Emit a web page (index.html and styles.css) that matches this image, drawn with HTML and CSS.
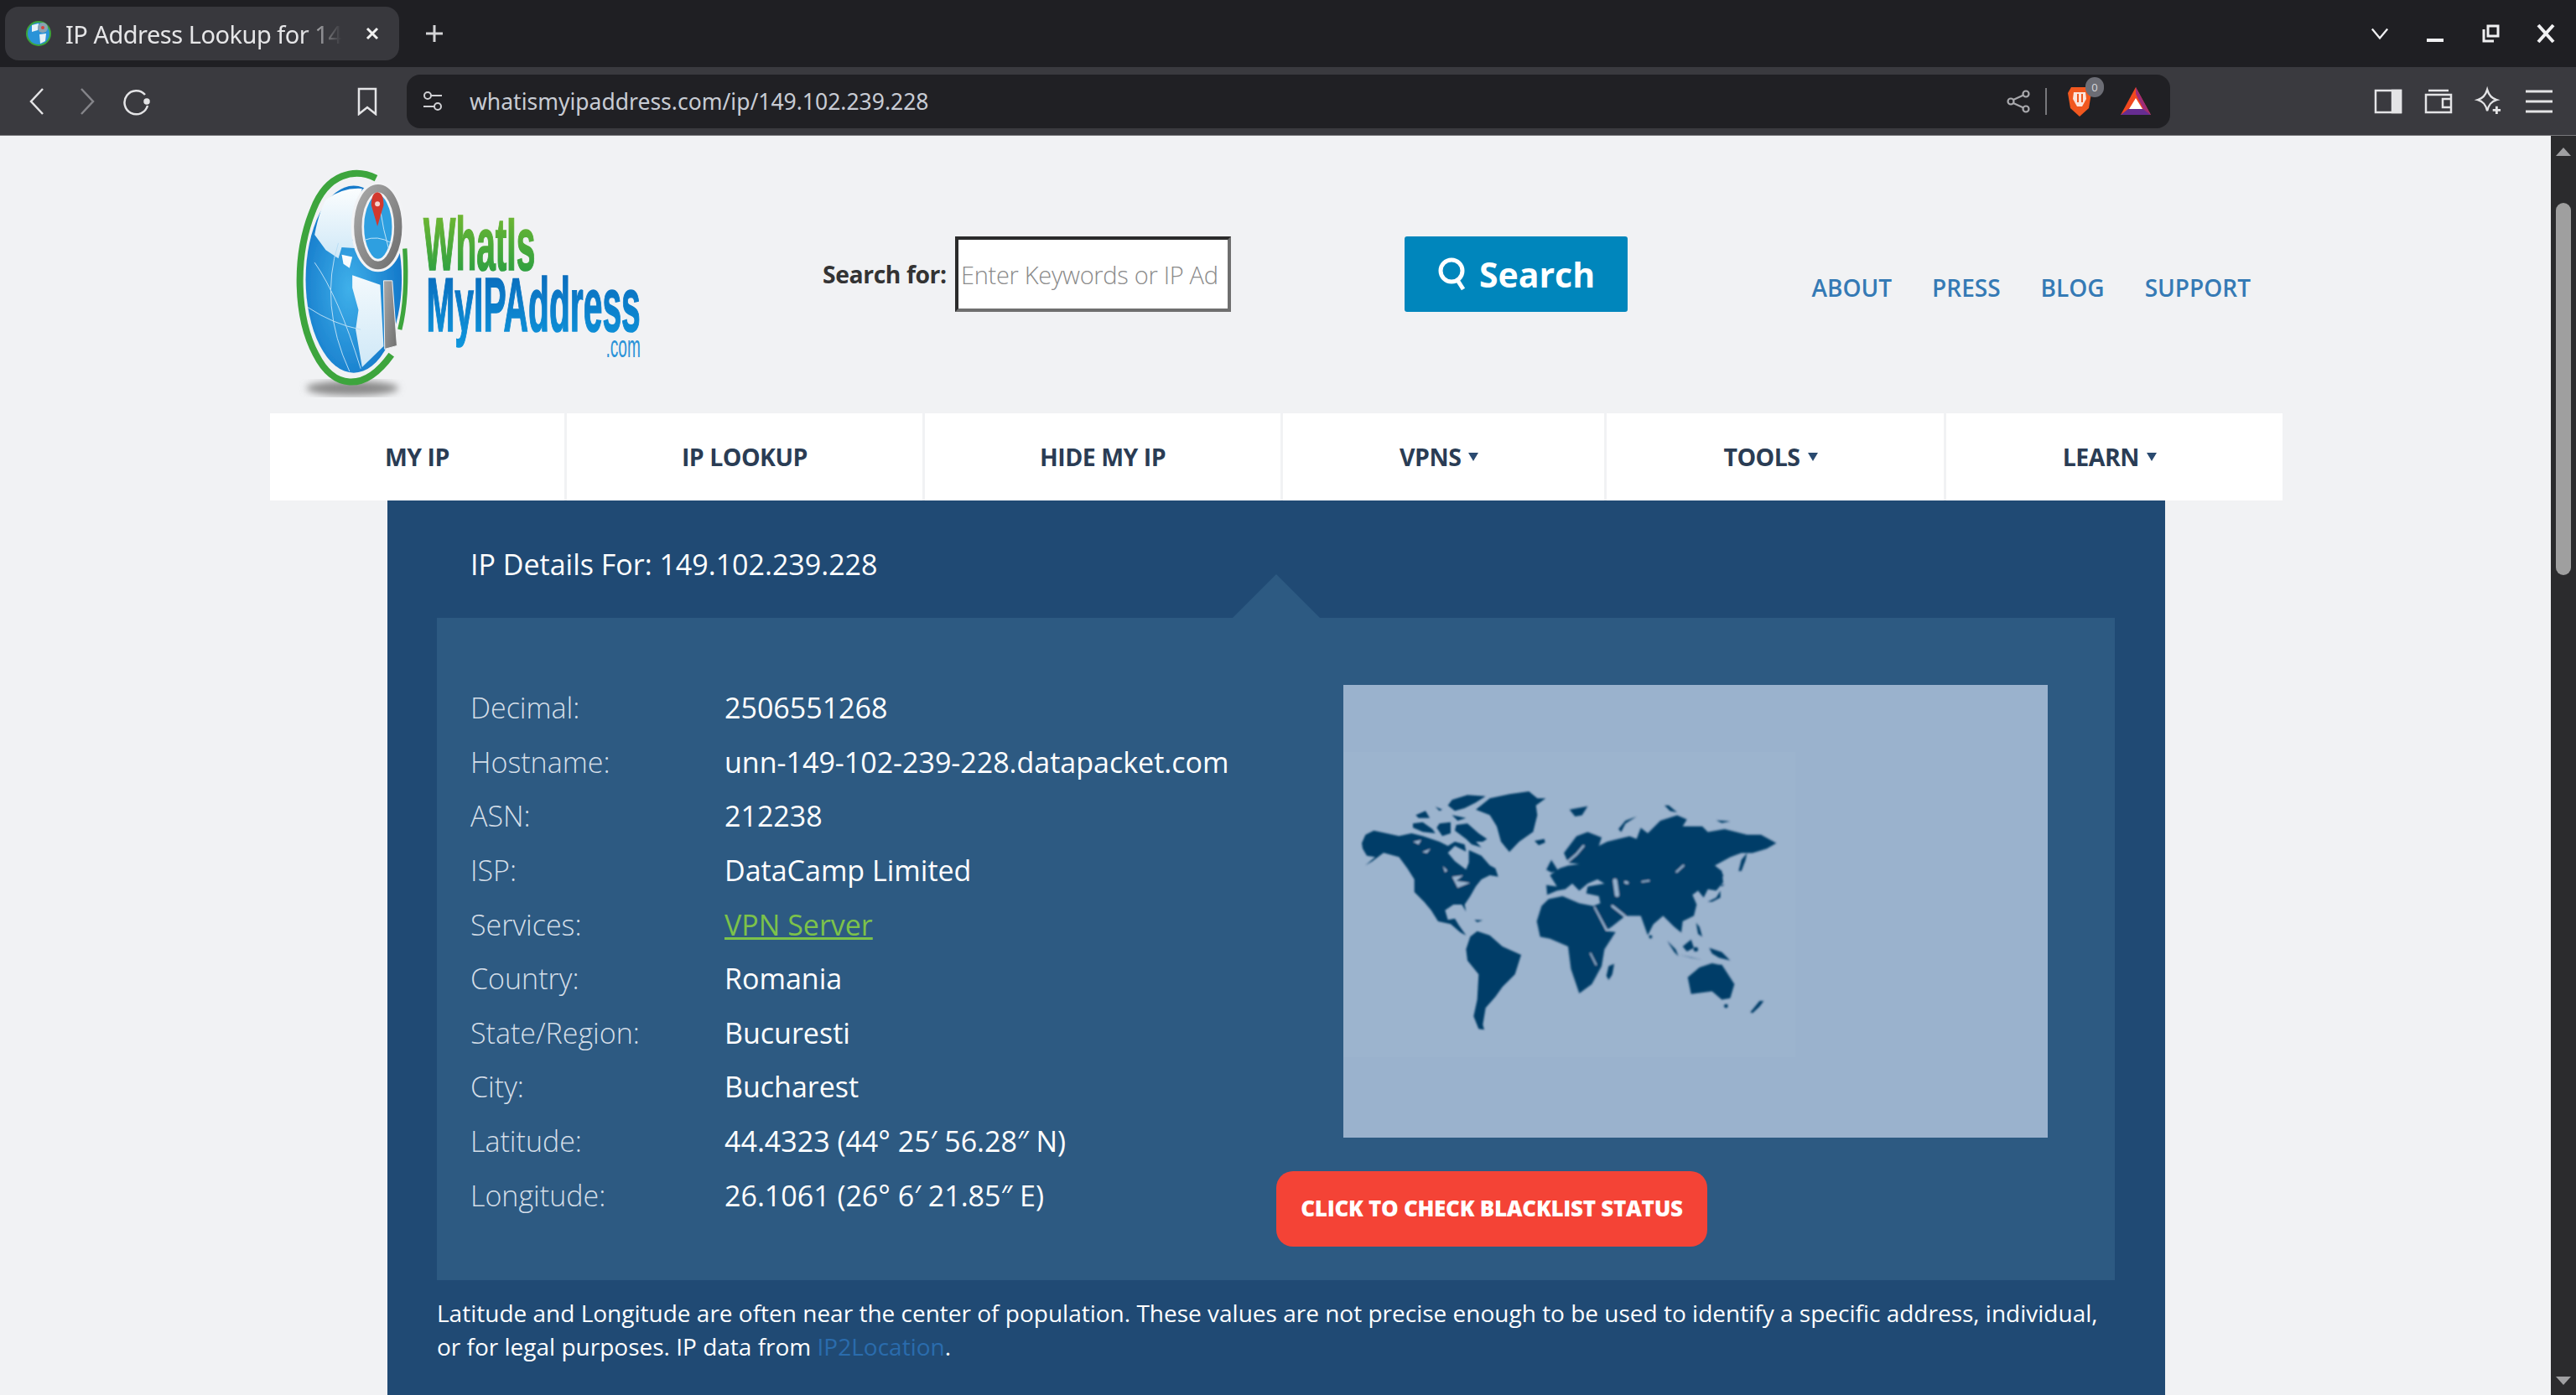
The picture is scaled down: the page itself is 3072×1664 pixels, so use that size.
FILE: index.html
```html
<!DOCTYPE html>
<html lang="en">
<head>
    <meta charset="UTF-8">
    <title>IP Address Lookup for 149.102.239.228</title>
    <link rel="stylesheet" href="styles.css">
</head>
<body>
    <div class="tabstrip">
        <div class="tab">
            <svg class="favicon" viewBox="0 0 32 32">
                <circle cx="16" cy="16" r="15" fill="#3ca53c"/>
                <circle cx="16" cy="16" r="13" fill="#2a93d8"/>
                <path d="M8 6 L16 4 L15 12 L8 14Z M17 17 L25 16 L24 25 L18 28Z" fill="#e8f2f8"/>
                <circle cx="21" cy="9" r="6" fill="#8aa2b2"/>
                <circle cx="21" cy="9" r="2" fill="#d8433a"/>
            </svg>
            <span class="tab-title">IP Address Lookup for 149.102.239.228</span>
            <svg class="tab-close" viewBox="0 0 16 16"><path d="M2 2 L14 14 M14 2 L2 14"/></svg>
        </div>
        <svg class="new-tab" viewBox="0 0 22 22"><path d="M11 1 V21 M1 11 H21"/></svg>
        <div class="window-btns">
            <svg viewBox="0 0 24 24"><path d="M2 6 L12 18 L22 6"/></svg>
            <svg viewBox="0 0 22 24"><path d="M1 20 H21" stroke-width="4"/></svg>
            <svg viewBox="0 0 22 24"><path d="M8 3 H20 V15 H8Z M3 7 V21 H15" stroke-width="3"/></svg>
            <svg viewBox="0 0 22 24"><path d="M2 2 L20 22 M20 2 L2 22" stroke-width="4"/></svg>
        </div>
    </div>

    <div class="toolbar">
        <svg class="tool-icon back" viewBox="0 0 20 34"><path d="M17 2 L3 17 L17 32"/></svg>
        <svg class="tool-icon forward" viewBox="0 0 20 34"><path d="M3 2 L17 17 L3 32"/></svg>
        <svg class="tool-icon reload" viewBox="0 0 34 34"><path d="M27 9 A14 14 0 1 0 30 22"/><circle cx="29" cy="17" r="2.5" fill="#e4e4e6"/></svg>
        <svg class="tool-icon bookmark" viewBox="0 0 26 34"><path d="M3 2 H23 V32 L13 24 L3 32Z"/></svg>
        <div class="urlbar">
            <svg class="site-settings" viewBox="0 0 26 28"><circle cx="7" cy="7" r="4"/><path d="M11 7 H24 M2 20 H15"/><circle cx="19" cy="20" r="4"/></svg>
            <span class="url">whatismyipaddress.com/ip/149.102.239.228</span>
            <svg class="share" viewBox="0 0 28 28"><circle cx="23" cy="5" r="3.5"/><circle cx="5" cy="14" r="3.5"/><circle cx="23" cy="23" r="3.5"/><path d="M8 12 L20 6.5 M8 16 L20 21.5"/></svg>
            <span class="url-sep"></span>
            <span class="shields">
                <svg viewBox="0 0 30 38"><path d="M5 2 H25 L29 9 L26 27 L15 37 L4 27 L1 9Z" fill="#f1581f"/><path d="M8 8 H22 L23 16 L18 25 H12 L7 16Z" fill="#fbe5dc"/><path d="M13 10 V20 M18 10 V20" stroke="#f1581f" stroke-width="2"/></svg>
                <span class="shields-badge">0</span>
            </span>
            <svg class="bat" viewBox="0 0 36 34"><path d="M18 0 L36 33 H0Z" fill="#f1481f"/><path d="M18 0 L36 33 L27 26 L18 8Z" fill="#9e2b78"/><path d="M0 33 L9 26 H27 L36 33Z" fill="#662d91"/><path d="M18 13 L26 26 H10Z" fill="#fff"/></svg>
        </div>
        <div class="tool-right">
            <svg viewBox="0 0 34 30"><path d="M2 2 H32 V28 H2Z"/><path d="M22 2 H32 V28 H22Z" fill="#e4e4e6"/></svg>
            <svg viewBox="0 0 34 30"><path d="M2 7 H32 V28 H2Z M5 2 H29"/><path d="M32 12 H22 V22 H32"/></svg>
            <svg viewBox="0 0 34 32"><path d="M15 1 C17 8 20 12 27 14 C20 16 17 20 15 28 C13 20 10 16 3 14 C10 12 13 8 15 1Z"/><path d="M27 22 V32 M22 27 H32" stroke-width="3"/></svg>
            <svg viewBox="0 0 34 30"><path d="M1 3 H33 M1 15 H33 M1 27 H33" stroke-width="3"/></svg>
        </div>
    </div>

    <div class="viewport">
        <div class="page">
            <div class="wrap">
                <header class="site-header">
                    <svg class="logo" viewBox="0 0 1500 940">
                        <defs>
                            <radialGradient id="oceanFill" cx="45%" cy="55%" r="65%">
                                <stop offset="0" stop-color="#3fb0ea"/>
                                <stop offset="1" stop-color="#0c6fc4"/>
                            </radialGradient>
                            <linearGradient id="landFill" x1="0" y1="0" x2="0" y2="1">
                                <stop offset="0" stop-color="#fbfdfe"/>
                                <stop offset="1" stop-color="#cfe8f7"/>
                            </linearGradient>
                            <linearGradient id="ringFill" x1="0" y1="0" x2="1" y2="1">
                                <stop offset="0" stop-color="#a8a8a8"/>
                                <stop offset="1" stop-color="#6f6f6f"/>
                            </linearGradient>
                            <linearGradient id="whatFill" x1="0" y1="0" x2="0" y2="1">
                                <stop offset="0" stop-color="#7cbb2e"/>
                                <stop offset="1" stop-color="#1f9b45"/>
                            </linearGradient>
                            <linearGradient id="myFill" x1="0" y1="0" x2="0" y2="1">
                                <stop offset="0" stop-color="#0a66b8"/>
                                <stop offset="1" stop-color="#0e96dc"/>
                            </linearGradient>
                            <filter id="logoBlur"><feGaussianBlur stdDeviation="12"/></filter>
                            <filter id="logoSoft"><feGaussianBlur stdDeviation="2"/></filter>
                        </defs>
                        <ellipse cx="300" cy="850" rx="165" ry="26" fill="#8a8a8a" filter="url(#logoBlur)"/>
                        <g filter="url(#logoSoft)">
                            <ellipse cx="305" cy="460" rx="172" ry="335" fill="url(#oceanFill)"/>
                            <path d="M205 175 Q265 130 335 135 L312 220 L300 320 L330 350 L262 345 L250 385 L205 355 L165 300 Q180 220 205 175Z" fill="url(#landFill)"/>
                            <path d="M262 372 L300 380 L290 420 L268 405Z M300 445 L400 480 L412 700 L335 775 L312 640 L322 570 L300 490Z" fill="url(#landFill)"/>
                            <path d="M165 400 Q250 520 330 780 M140 560 Q230 620 330 640 M250 330 Q180 550 290 790" fill="none" stroke="#b9def5" stroke-width="3"/>
                            <path d="M385 98 C310 60 210 80 160 210 C90 380 100 600 170 730 C230 850 340 870 440 730" fill="none" stroke="#3ca53c" stroke-width="24"/>
                            <path d="M488 350 C495 460 490 560 470 640" fill="none" stroke="#3ca53c" stroke-width="16"/>
                            <ellipse cx="392" cy="272" rx="73" ry="138" fill="#2f9fe0" stroke="#f2f3f5" stroke-width="46"/>
                            <ellipse cx="392" cy="272" rx="72" ry="138" fill="none" stroke="url(#ringFill)" stroke-width="28"/>
                            <path d="M342 320 Q390 300 440 330 M400 210 Q410 280 430 350" fill="none" stroke="#bfe3f7" stroke-width="3"/>
                            <path d="M390 270 L368 195 Q368 150 390 148 Q412 150 412 195Z" fill="#d2382f"/>
                            <circle cx="390" cy="190" r="9" fill="#f6d4cf"/>
                            <path d="M412 465 H443 L460 698 L416 710Z" fill="url(#ringFill)" stroke="#f2f3f5" stroke-width="3"/>
                        </g>
                        <text class="logo-what" x="555" y="425" textLength="400" lengthAdjust="spacingAndGlyphs">WhatIs</text>
                        <text class="logo-my" x="565" y="645" textLength="767" lengthAdjust="spacingAndGlyphs">MyIPAddress</text>
                        <text class="logo-com" x="1208" y="738" textLength="124" lengthAdjust="spacingAndGlyphs">.com</text>
                    </svg>
                    <form class="search-form">
                        <label class="search-label">Search for:</label>
                        <input class="search-input" type="text" placeholder="Enter Keywords or IP Address...">
                        <button class="search-btn" type="button">
                            <svg viewBox="0 0 36 40"><circle cx="17" cy="16" r="13"/><path d="M24 27 L31 38"/></svg>
                            Search
                        </button>
                    </form>
                    <nav class="top-links">
                        <a>ABOUT</a>
                        <a>PRESS</a>
                        <a>BLOG</a>
                        <a>SUPPORT</a>
                    </nav>
                </header>

                <nav class="main-nav">
                    <a class="nav-item">MY IP</a>
                    <a class="nav-item">IP LOOKUP</a>
                    <a class="nav-item">HIDE MY IP</a>
                    <a class="nav-item has-menu">VPNS</a>
                    <a class="nav-item has-menu">TOOLS</a>
                    <a class="nav-item has-menu">LEARN</a>
                </nav>
            </div>

            <main class="details">
                <h2 class="details-title">IP Details For: 149.102.239.228</h2>
                <div class="details-panel">
                    <dl class="info">
                        <dt>Decimal:</dt><dd>2506551268</dd>
                        <dt>Hostname:</dt><dd>unn-149-102-239-228.datapacket.com</dd>
                        <dt>ASN:</dt><dd>212238</dd>
                        <dt>ISP:</dt><dd>DataCamp Limited</dd>
                        <dt>Services:</dt><dd><a class="vpn-link">VPN Server</a></dd>
                        <dt>Country:</dt><dd>Romania</dd>
                        <dt>State/Region:</dt><dd>Bucuresti</dd>
                        <dt>City:</dt><dd>Bucharest</dd>
                        <dt>Latitude:</dt><dd>44.4323 (44° 25′ 56.28″ N)</dd>
                        <dt>Longitude:</dt><dd>26.1061 (26° 6′ 21.85″ E)</dd>
                    </dl>
                    <div class="map-col">
                        <div class="map">
                            <svg viewBox="-54 -336 2520 1620">
                                <defs>
                                    <filter id="mapSoft" x="-5%" y="-5%" width="110%" height="110%"><feGaussianBlur stdDeviation="2.4"/></filter>
                                </defs>
                                <rect x="-54" y="-96" width="1617" height="1092" fill="#9cb4ce"/>
                                <g filter="url(#mapSoft)">
                                    <g fill="#033e68">
                                        <!-- north america -->
                                        <path d="M12 230 L25 200 L55 185 L100 195 L145 205 L190 195 L230 205 L290 225 L320 240 L345 225 L380 235 L385 260 L345 240 L320 265 L345 295 L385 325 L395 300 L395 255 L440 275 L470 310 L490 320 L500 350 L470 345 L440 360 L420 385 L400 420 L380 450 L385 475 L370 450 L340 450 L310 470 L320 505 L345 500 L360 525 L385 560 L365 550 L330 520 L285 510 L260 470 L235 440 L200 405 L200 360 L175 320 L145 280 L90 265 L50 295 L25 310 L60 280 L30 275 L15 250Z"/>
                                        <path d="M335 75 L390 58 L455 62 L420 85 L380 105 L345 115 L320 95Z"/>
                                        <path d="M350 165 L390 160 L430 195 L460 215 L445 225 L420 225 L440 245 L405 235 L385 215 L345 185Z"/>
                                        <path d="M195 160 L230 155 L265 180 L275 195 L230 190 L195 175Z"/>
                                        <path d="M205 130 L240 115 L255 140 L215 140Z"/>
                                        <path d="M275 100 L300 110 L290 115Z"/>
                                        <path d="M290 160 L330 155 L330 195 L300 205 L280 175Z"/>
                                        <path d="M335 130 L385 140 L355 150Z"/>
                                        <path d="M420 110 L470 70 L540 55 L610 45 L640 70 L670 70 L635 95 L640 130 L625 190 L575 225 L540 262 L510 225 L495 170 L470 130Z"/>
                                        <path d="M630 222 L665 215 L668 228 L645 238Z"/>
                                        <path d="M415 505 L445 506 L425 513Z"/>
                                        <!-- south america -->
                                        <path d="M400 565 L425 545 L470 560 L515 600 L582 630 L560 700 L515 745 L490 780 L455 820 L445 880 L450 898 L430 895 L412 850 L425 790 L430 700 L390 650 L385 610Z"/>
                                    </g>
                                    <g fill="#9ab2cd">
                                        <path d="M195 225 L225 218 L215 235Z"/>
                                        <path d="M228 262 L258 250 L245 266Z"/>
                                        <path d="M302 312 L318 328 L310 335Z"/>
                                        <path d="M335 350 L375 345 L350 365 L400 372 L355 390 L345 370Z"/>
                                    </g>
                                    <g transform="translate(690 0)">
                                        <g fill="#033e68">
                                            <!-- africa -->
                                            <path d="M-52 510 L-35 455 L-10 430 L40 420 L100 445 L150 455 L195 545 L230 548 L190 610 L180 670 L145 735 L100 768 L70 680 L60 600 L-5 572 L-40 565Z"/>
                                            <path d="M225 662 L218 700 L205 720 L197 705 L205 670Z"/>
                                            <!-- eurasia -->
                                            <path d="M-18 380 L20 385 L-5 345 L30 320 L60 310 L100 305 L60 300 L45 265 L90 205 L130 190 L180 210 L170 240 L200 225 L280 205 L305 215 L320 175 L345 195 L390 150 L450 130 L485 145 L470 170 L540 170 L560 190 L620 180 L700 200 L750 200 L805 230 L770 250 L720 265 L680 265 L640 280 L585 310 L610 330 L615 370 L590 400 L560 395 L545 425 L525 400 L505 415 L520 450 L510 490 L470 510 L465 550 L440 530 L400 490 L365 520 L345 560 L320 490 L265 490 L215 530 L200 540 L150 455 L175 445 L170 420 L125 410 L130 385 L190 375 L165 360 L130 375 L100 400 L75 375 L50 395 L20 400 L-15 415Z"/>
                                            <path d="M-18 325 L0 290 L25 330 L0 335Z"/>
                                            <path d="M240 180 L265 150 L305 135 L265 160 L250 190Z"/>
                                            <path d="M670 330 L680 290 L700 265 L695 290 L680 330Z"/>
                                            <path d="M560 440 L590 425 L605 400 L605 425 L575 440Z"/>
                                            <path d="M605 325 L615 345 L610 355Z"/>
                                            <path d="M605 380 L620 378 L610 385Z"/>
                                            <path d="M65 110 L130 98 L110 130 L85 135Z"/>
                                            <path d="M405 95 L420 95 L450 120 L425 115Z"/>
                                            <path d="M590 148 L640 152 L610 158Z"/>
                                            <circle cx="355" cy="565" r="6"/>
                                            <!-- south east asia -->
                                            <path d="M415 580 L445 610 L455 635 L440 620Z"/>
                                            <path d="M460 630 L540 648 L500 640Z"/>
                                            <path d="M470 600 L500 575 L510 605 L485 618Z"/>
                                            <path d="M518 515 L530 530 L540 565 L525 555Z"/>
                                            <circle cx="517" cy="610" r="8"/>
                                            <path d="M565 605 L610 620 L640 650 L600 640 L575 625Z"/>
                                            <!-- oceania -->
                                            <path d="M488 710 L530 675 L575 660 L600 665 L610 665 L655 735 L640 785 L610 790 L575 760 L500 770Z"/>
                                            <circle cx="625" cy="813" r="7"/>
                                            <path d="M712 835 L745 795 L760 795 L745 815 L720 838Z"/>
                                        </g>
                                        <g fill="none" stroke="#9ab2cd" stroke-linecap="round">
                                            <path d="M155 460 L198 540" stroke-width="6"/>
                                            <path d="M218 455 L262 490" stroke-width="9"/>
                                            <path d="M228 365 L235 415" stroke-width="16"/>
                                            <path d="M265 370 L272 372" stroke-width="10"/>
                                            <path d="M325 368 L350 364" stroke-width="6"/>
                                            <path d="M448 333 L473 310" stroke-width="7"/>
                                            <path d="M115 240 L90 270 L60 295" stroke-width="8"/>
                                            <path d="M140 625 L160 665" stroke-width="6"/>
                                        </g>
                                    </g>
                                </g>
                            </svg>
                        </div>
                        <a class="blacklist-btn">CLICK TO CHECK BLACKLIST STATUS</a>
                    </div>
                </div>
                <p class="note">Latitude and Longitude are often near the center of population. These values are not precise enough to be used to identify a specific address, individual, or for legal purposes. IP data from <a class="note-link">IP2Location</a>.</p>
            </main>
        </div>

        <div class="scrollbar">
            <span class="scroll-arrow up"></span>
            <span class="scroll-thumb"></span>
            <span class="scroll-arrow down"></span>
        </div>
    </div>
</body>
</html>
```

FILE: styles.css
```css
html, body {
    margin: 0;
    padding: 0;
    height: 1664px;
    overflow: hidden;
}
body {
    font-family: "Open Sans", "Noto Sans", sans-serif;
    background-color: #f1f2f4;
    display: flex;
    flex-direction: column;
}

/* browser chrome */
.tabstrip {
    height: 80px;
    background-color: #1f1f23;
    display: flex;
    align-items: center;
    flex-shrink: 0;
}
.tab {
    width: 470px;
    height: 64px;
    margin-left: 6px;
    background-color: #38383d;
    border-radius: 16px;
    display: flex;
    align-items: center;
    box-sizing: border-box;
    padding-left: 24px;
}
.favicon {
    width: 32px;
    height: 32px;
    flex-shrink: 0;
}
.tab-title {
    width: 336px;
    margin-left: 16px;
    font-family: "Noto Sans", sans-serif;
    font-size: 29px;
    letter-spacing: -0.5px;
    color: #e6e6e8;
    white-space: nowrap;
    overflow: hidden;
    -webkit-mask-image: linear-gradient(to right, #000 84%, transparent 98%);
    mask-image: linear-gradient(to right, #000 84%, transparent 98%);
}
.tab-close {
    width: 16px;
    height: 16px;
    margin-left: 22px;
    fill: none;
    stroke: #f2f2f2;
    stroke-width: 3;
}
.new-tab {
    width: 22px;
    height: 22px;
    margin-left: 31px;
    fill: none;
    stroke: #d4d4d6;
    stroke-width: 3;
}
.window-btns {
    margin-left: auto;
    display: flex;
    align-items: center;
    gap: 44px;
    padding-right: 25px;
}
.window-btns svg {
    width: 22px;
    height: 24px;
    fill: none;
    stroke: #f0f0f2;
    stroke-width: 2.5;
}
.toolbar {
    height: 82px;
    background-color: #3a3a3f;
    border-bottom: 1px solid #77777b;
    box-sizing: border-box;
    display: flex;
    align-items: center;
    flex-shrink: 0;
}
.tool-icon {
    fill: none;
    stroke: #e4e4e6;
    stroke-width: 2.5;
    height: 34px;
}
.back {
    width: 20px;
    margin-left: 34px;
}
.forward {
    width: 20px;
    margin-left: 40px;
    stroke: #85858a;
}
.reload {
    width: 34px;
    margin-left: 32px;
}
.bookmark {
    width: 26px;
    margin-left: 245px;
}
.urlbar {
    width: 2103px;
    height: 64px;
    margin-left: 34px;
    background-color: #202024;
    border-radius: 16px;
    display: flex;
    align-items: center;
    box-sizing: border-box;
    padding-left: 18px;
}
.site-settings {
    width: 26px;
    height: 28px;
    fill: none;
    stroke: #d0d0d4;
    stroke-width: 2;
}
.url {
    margin-left: 31px;
    font-family: "Noto Sans", sans-serif;
    font-size: 26.5px;
    color: #c8ccd4;
    white-space: nowrap;
}
.share {
    width: 28px;
    height: 28px;
    margin-left: auto;
    fill: none;
    stroke: #a8a8ac;
    stroke-width: 2.2;
}
.url-sep {
    width: 2px;
    height: 32px;
    margin-left: 18px;
    background-color: #77777b;
}
.shields {
    position: relative;
    width: 30px;
    height: 38px;
    margin-left: 24px;
}
.shields svg {
    width: 30px;
    height: 38px;
    display: block;
}
.shields-badge {
    position: absolute;
    top: -10px;
    right: -14px;
    width: 22px;
    height: 24px;
    border-radius: 11px;
    background-color: #6c6d75;
    color: #d8d8dc;
    font-size: 13px;
    line-height: 24px;
    text-align: center;
}
.bat {
    width: 36px;
    height: 34px;
    margin-left: 34px;
    margin-right: 23px;
}
.tool-right {
    display: flex;
    align-items: center;
    gap: 26px;
    margin-left: 243px;
}
.tool-right svg {
    width: 34px;
    height: 30px;
    fill: none;
    stroke: #e4e4e6;
    stroke-width: 2.5;
    overflow: visible;
    flex-shrink: 0;
}

/* page area */
.viewport {
    flex: 1;
    display: flex;
    min-height: 0;
}
.page {
    width: 3042px;
    padding-left: 2px;
    box-sizing: border-box;
    flex-shrink: 0;
    overflow: hidden;
    background-color: #f1f2f4;
}
.scrollbar {
    flex: 1;
    background-color: #2b2b2d;
    display: flex;
    flex-direction: column;
    align-items: center;
    padding: 14px 0 12px;
    box-sizing: border-box;
}
.scroll-arrow {
    width: 0;
    height: 0;
    border-left: 9px solid transparent;
    border-right: 9px solid transparent;
}
.scroll-arrow.up {
    border-bottom: 10px solid #a0a0a2;
}
.scroll-arrow.down {
    border-top: 10px solid #a0a0a2;
    margin-top: auto;
}
.scroll-thumb {
    width: 18px;
    height: 444px;
    margin-top: 56px;
    border-radius: 9px;
    background-color: #9f9f9f;
}
.wrap {
    width: 2400px;
    margin: 0 auto;
}
.site-header {
    height: 331px;
    box-sizing: border-box;
    padding-top: 18px;
    display: flex;
    align-items: flex-start;
}
.logo {
    width: 500px;
    height: 313px;
    margin-left: -2px;
    flex-shrink: 0;
}
.logo-what {
    font-family: "Liberation Sans", sans-serif;
    font-weight: 700;
    font-size: 265px;
    fill: url(#whatFill);
    stroke: url(#whatFill);
    stroke-width: 5;
}
.logo-my {
    font-family: "Liberation Sans", sans-serif;
    font-weight: 700;
    font-size: 272px;
    fill: url(#myFill);
    stroke: url(#myFill);
    stroke-width: 5;
}
.logo-com {
    font-family: "Liberation Sans", sans-serif;
    font-size: 110px;
    fill: #2a92d8;
}
.search-form {
    display: flex;
    align-items: center;
    margin-left: 161px;
    margin-top: 102px;
}
.search-label {
    font-size: 28.3px;
    font-weight: 700;
    letter-spacing: -0.4px;
    color: #333;
    margin-right: 8px;
    width: 150px;
    white-space: nowrap;
}
.search-input {
    width: 329px;
    height: 90px;
    box-sizing: border-box;
    border: 4px solid;
    border-color: #2b2b2b #6f6f6f #6f6f6f #2b2b2b;
    background-color: #fff;
    padding: 0 11px 0 3px;
    font-family: "Open Sans", sans-serif;
    font-size: 29px;
    font-weight: 300;
    letter-spacing: -0.3px;
}
.search-input::placeholder {
    color: #8a8a8a;
    opacity: 1;
}
.search-btn {
    width: 266px;
    height: 90px;
    margin-left: 207px;
    border: none;
    border-radius: 3px;
    background-color: #0086bc;
    color: #fff;
    font-family: "Open Sans", sans-serif;
    font-size: 41px;
    font-weight: 700;
    display: flex;
    align-items: center;
    justify-content: center;
    gap: 14px;
    padding: 0;
}
.search-btn svg {
    width: 36px;
    height: 40px;
    fill: none;
    stroke: #fff;
    stroke-width: 5;
}
.top-links {
    margin-left: auto;
    margin-top: 143px;
    padding-right: 38px;
    display: flex;
    gap: 48px;
    font-size: 28px;
    line-height: 40px;
    font-weight: 600;
    color: #357ab5;
}
.main-nav {
    height: 104px;
    background-color: #fff;
    display: flex;
}
.nav-item {
    flex: 0 1 auto;
    box-sizing: border-box;
    display: flex;
    align-items: center;
    justify-content: center;
    padding: 0 137px;
    font-size: 28.5px;
    font-weight: 700;
    letter-spacing: -0.5px;
    color: #2a3c54;
    border-right: 3px solid #f1f2f4;
    white-space: nowrap;
}
.nav-item.has-menu {
    padding: 0 150px 0 139px;
}
.nav-item:last-child {
    flex-grow: 1;
    border-right: none;
}
.has-menu::after {
    content: "";
    width: 0;
    height: 0;
    margin-left: 9px;
    border-left: 6px solid transparent;
    border-right: 6px solid transparent;
    border-top: 10px solid #2a4a70;
}

/* ip details */
.details {
    width: 2120px;
    margin: 0 auto;
    background-color: #204a74;
    box-sizing: border-box;
    padding: 51px 60px 60px 59px;
}
.details-title {
    margin: 0 0 39px;
    padding-left: 40px;
    font-size: 34px;
    line-height: 50px;
    font-weight: 400;
    color: #fff;
}
.details-panel {
    position: relative;
    height: 790px;
    background-color: #2d5a82;
    display: grid;
    grid-template-columns: 1001px 1fr;
}
.details-panel::before {
    content: "";
    position: absolute;
    top: -52px;
    left: 949px;
    width: 0;
    height: 0;
    border-left: 52px solid transparent;
    border-right: 52px solid transparent;
    border-bottom: 52px solid #2d5a82;
}
.info {
    margin: 75px 0 0 40px;
    display: grid;
    grid-template-columns: 303px 1fr;
    grid-auto-rows: 64.6px;
    align-items: center;
    font-size: 34px;
}
.info dt {
    color: #d4dee8;
    font-weight: 300;
}
.info dd {
    margin: 0;
    color: #fff;
    white-space: nowrap;
}
.vpn-link {
    color: #7cc24a;
    text-decoration: underline;
}
.map {
    width: 840px;
    height: 540px;
    margin: 80px 0 0 80px;
    background-color: #9ab2cd;
}
.map svg {
    width: 100%;
    height: 100%;
    display: block;
}
.blacklist-btn {
    display: block;
    width: 514px;
    height: 90px;
    margin-top: 40px;
    border-radius: 20px;
    background-color: #f44336;
    color: #fff;
    font-size: 26px;
    font-weight: 800;
    line-height: 88px;
    letter-spacing: -0.3px;
    text-align: center;
    white-space: nowrap;
}
.note {
    margin: 19px 0 0;
    font-size: 28px;
    line-height: 40px;
    color: #fff;
}
.note-link {
    color: #2a6cad;
}
```
